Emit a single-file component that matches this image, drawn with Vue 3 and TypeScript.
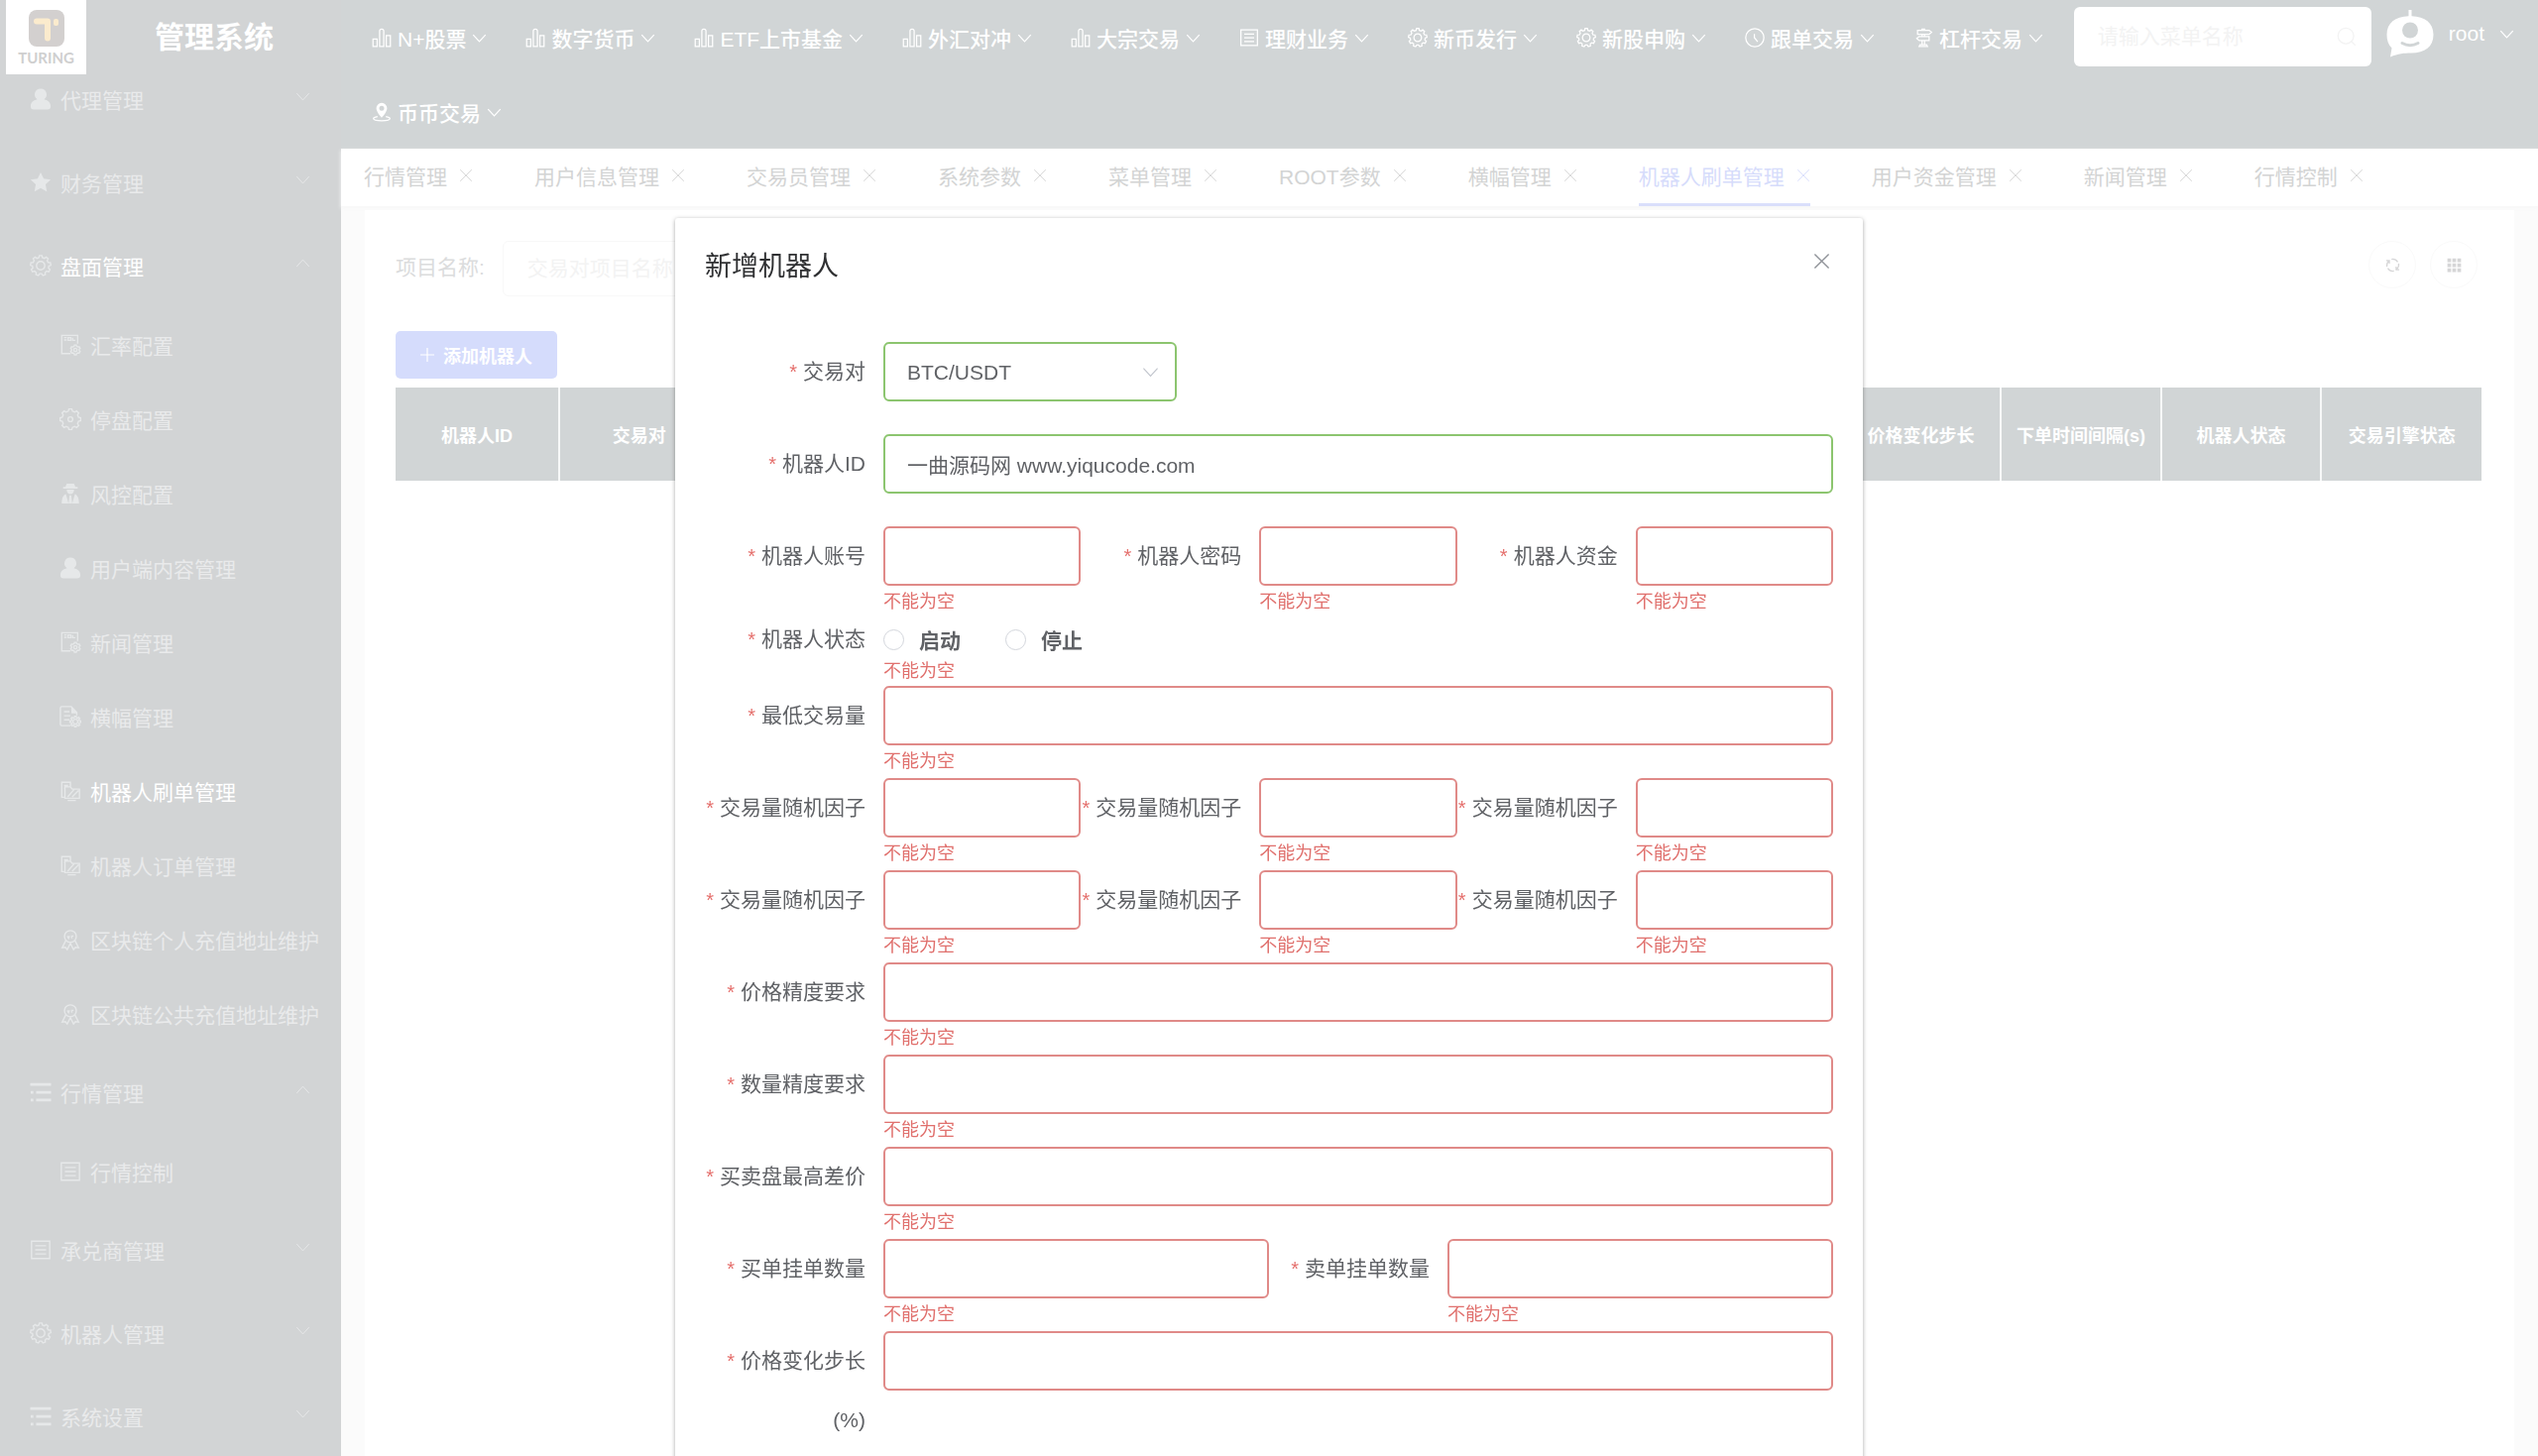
<script setup lang="ts">
import { h, ref } from 'vue'
import type { FunctionalComponent } from 'vue'

interface Shape {
  d: string
  fill?: boolean
}

interface MenuEntry {
  icon: string
  label: string
  open?: boolean
  lit?: boolean
  children?: MenuEntry[]
}

interface Field {
  id: string
  label: string
  secret?: boolean
}

function gear(cx: number, cy: number, teeth: number, outer: number, inner: number): string {
  const step = (Math.PI * 2) / teeth
  const at = (r: number, a: number) =>
    `${(cx + r * Math.sin(a)).toFixed(2)} ${(cy - r * Math.cos(a)).toFixed(2)}`
  let d = ''
  for (let i = 0; i < teeth; i++) {
    const a = i * step
    d += `${i ? 'L' : 'M'}${at(outer, a - step * 0.18)}L${at(outer, a + step * 0.18)}`
    d += `L${at(inner, a + step * 0.32)}L${at(inner, a + step * 0.68)}`
  }
  return d + 'Z'
}

function circle(cx: number, cy: number, r: number): string {
  return `M${cx - r} ${cy}a${r} ${r} 0 1 0 ${2 * r} 0a${r} ${r} 0 1 0 ${-2 * r} 0Z`
}

const shapes: Record<string, Shape[]> = {
  bars: [{ d: 'M1.500 13.500h5v9h-5zM9.500 4a2.500 2.500 0 0 1 5 0v18.500h-5zM17.500 9.500h5v13h-5z' }],
  list: [{ d: 'M2 2.500h20v19H2zM6 7.500h12M6 12h12M6 16.500h12' }],
  gear: [{ d: gear(12, 12, 9, 11.2, 9) }, { d: circle(12, 12, 4.6) }],
  cog: [{ d: gear(12, 12, 8, 11.4, 9.2) }, { d: circle(12, 12, 2.6) }],
  clock: [{ d: circle(12, 12, 11) }, { d: 'M11.500 7.500v4.500l4 5' }],
  sign: [
    { d: 'M10.500 3V1.500h3V3M5 3h14l3 2.500L19 8H5zM10.500 8v2.500M13.500 8v2.500M19 10.500H7L4 13l3 2.500h12zM10.500 15.500v5M13.500 15.500v5M7 22.500l1-2h8l1 2z' },
  ],
  pin: [
    { d: 'M12 1a6.500 6.500 0 0 0-6.500 6.500C5.500 12 12 19 12 19s6.500-7 6.500-11.500A6.500 6.500 0 0 0 12 1zm0 9.500a3 3 0 1 1 0-6 3 3 0 0 1 0 6z', fill: true },
    { d: 'M7 17.500c-3 .5-5 1.300-5 2.300 0 1.700 4.500 2.700 10 2.700s10-1 10-2.700c0-1-2-1.800-5-2.300' },
  ],
  user: [
    { d: 'M12 .5a6.500 6.500 0 0 1 3.800 11.800C20.500 13.200 23 16 23 20c0 2.500-1 3.500-3.500 3.500h-15C2 23.500 1 22.500 1 20c0-4 2.500-6.800 7.200-7.700A6.500 6.500 0 0 1 12 .5z', fill: true },
  ],
  star: [{ d: 'M12 1l3.400 7 7.600 1-5.600 5.300L18.800 22 12 18.300 5.200 22l1.400-7.700L1 9l7.600-1z', fill: true }],
  sheet: [
    { d: 'M12 21.500H2.500v-20H20v9M5 4h3M5 6.500h3M9.500 4h3v3h-3zM14.500 4v3h3' },
    { d: gear(17.5, 17.5, 6, 5.5, 4.3) },
    { d: circle(17.5, 17.5, 1.8) },
  ],
  agent: [
    { d: 'M6.500 4.500L8 1h8l1.500 3.500H20v2H4v-2zM8 7.500h8c0 3-1.500 5-4 5s-4-2-4-5zM7 12.500l3 10.500H2.500c0-5 1-9 4.500-10.500zM17 12.500L14 23h7.500c0-5-1-9-4.500-10.500zM11 14h2l1 9h-4z', fill: true },
  ],
  doc: [
    { d: 'M12 22H2.500a1.500 1.500 0 0 1-1.500-1.500v-18A1.500 1.500 0 0 1 2.500 1H13l6 6.500v3M5 6.500h6M5 11h7M5 15.500h6' },
    { d: 'M13 1l7 7.500h-7z', fill: true },
    { d: gear(17.5, 17.5, 8, 6, 4.5) },
    { d: circle(17.5, 17.5, 2.6) },
  ],
  boards: [
    { d: 'M6 19H2.500V2.500H12v5M5 6h4.500M5 9h1.500M6 7.500h6l2 2.500h8v10H6zM9 18.500l7-8M14 18.500l7-7M9 22.500h9' },
  ],
  medal: [
    { d: circle(12, 8.5, 6.5) },
    { d: 'M7 13l-4 8 3.500-.5L8.500 23l3.500-7 3.500 7 2-2.500 3.500.5-4-8M8.500 8l1.500 2.500L11 8M13.500 10.500V8h2' },
  ],
  menu: [{ d: 'M.5 2h23v3H.500zM7 10.500h16.500v3H7zM7 19h16.500v3H7zM1 10.500h3v3H1zM1 19h3v3H1z', fill: true }],
  down: [{ d: 'M2 6.500l10 11 10-11' }],
  up: [{ d: 'M2 17.500l10-11 10 11' }],
  cross: [{ d: 'M2 2l20 20M22 2L2 22' }],
  plus: [{ d: 'M12 0v24M0 12h24' }],
  search: [{ d: circle(11, 11, 9.5) }, { d: 'M18 18l4.500 4.500' }],
  refresh: [
    { d: 'M2.500 14.500a10 10 0 0 1 3-9M1.500 4.500h5v5M21.500 9.500a10 10 0 0 1-3 9M22.500 19.500h-5v-5M10 2.500a10 10 0 0 1 10 4.500M14 21.500A10 10 0 0 1 4 17' },
  ],
  grid: [
    { d: 'M1 1h6v6H1zM9 1h6v6H9zM17 1h6v6h-6zM1 9h6v6H1zM9 9h6v6H9zM17 9h6v6h-6zM1 17h6v6H1zM9 17h6v6H9zM17 17h6v6h-6z', fill: true },
  ],
}

const Icon: FunctionalComponent<{ name: string; weight?: number }> = (props) =>
  h(
    'svg',
    { viewBox: '0 0 24 24', 'aria-hidden': 'true' },
    shapes[props.name].map((s) =>
      h('path', {
        d: s.d,
        fill: s.fill ? 'currentColor' : 'none',
        stroke: s.fill ? 'none' : 'currentColor',
        'stroke-width': props.weight ?? 1.5,
      }),
    ),
  )
Icon.props = ['name', 'weight']

const topMenu: MenuEntry[] = [
  { icon: 'bars', label: 'N+股票' },
  { icon: 'bars', label: '数字货币' },
  { icon: 'bars', label: 'ETF上市基金' },
  { icon: 'bars', label: '外汇对冲' },
  { icon: 'bars', label: '大宗交易' },
  { icon: 'list', label: '理财业务' },
  { icon: 'gear', label: '新币发行' },
  { icon: 'gear', label: '新股申购' },
  { icon: 'clock', label: '跟单交易' },
  { icon: 'sign', label: '杠杆交易' },
  { icon: 'pin', label: '币币交易' },
]

const sideMenu: MenuEntry[] = [
  { icon: 'user', label: '代理管理' },
  { icon: 'star', label: '财务管理' },
  {
    icon: 'gear',
    label: '盘面管理',
    open: true,
    lit: true,
    children: [
      { icon: 'sheet', label: '汇率配置' },
      { icon: 'cog', label: '停盘配置' },
      { icon: 'agent', label: '风控配置' },
      { icon: 'user', label: '用户端内容管理' },
      { icon: 'sheet', label: '新闻管理' },
      { icon: 'doc', label: '横幅管理' },
      { icon: 'boards', label: '机器人刷单管理', lit: true },
      { icon: 'boards', label: '机器人订单管理' },
      { icon: 'medal', label: '区块链个人充值地址维护' },
      { icon: 'medal', label: '区块链公共充值地址维护' },
    ],
  },
  {
    icon: 'menu',
    label: '行情管理',
    open: true,
    children: [{ icon: 'list', label: '行情控制' }],
  },
  { icon: 'list', label: '承兑商管理' },
  { icon: 'gear', label: '机器人管理' },
  { icon: 'menu', label: '系统设置' },
]

const tabs = [
  '行情管理',
  '用户信息管理',
  '交易员管理',
  '系统参数',
  '菜单管理',
  'ROOT参数',
  '横幅管理',
  '机器人刷单管理',
  '用户资金管理',
  '新闻管理',
  '行情控制',
]
const activeTab = ref('机器人刷单管理')

const columns = ['机器人ID', '交易对', '', '', '', '', '', '', '', '价格变化步长', '下单时间间隔(s)', '机器人状态', '交易引擎状态']

const pair = ref('BTC/USDT')
const robotId = ref('一曲源码网 www.yiqucode.com')

const accountRow: Field[] = [
  { id: 'account', label: '机器人账号' },
  { id: 'password', label: '机器人密码', secret: true },
  { id: 'funds', label: '机器人资金' },
]

const detailRows: Field[][] = [
  [{ id: 'min-volume', label: '最低交易量' }],
  [
    { id: 'factor-1', label: '交易量随机因子' },
    { id: 'factor-2', label: '交易量随机因子' },
    { id: 'factor-3', label: '交易量随机因子' },
  ],
  [
    { id: 'factor-4', label: '交易量随机因子' },
    { id: 'factor-5', label: '交易量随机因子' },
    { id: 'factor-6', label: '交易量随机因子' },
  ],
  [{ id: 'price-precision', label: '价格精度要求' }],
  [{ id: 'amount-precision', label: '数量精度要求' }],
  [{ id: 'max-spread', label: '买卖盘最高差价' }],
  [
    { id: 'buy-orders', label: '买单挂单数量' },
    { id: 'sell-orders', label: '卖单挂单数量' },
  ],
]
</script>

<template>
  <div class="page">
    <aside class="side">
      <div class="brand">
        <div class="logo">
          <svg class="logo-mark" viewBox="0 0 36 37" aria-hidden="true">
            <rect width="36" height="37" rx="8" fill="#d3d0cf" />
            <path d="M8 11.500h11v17" fill="none" stroke="#fbebcd" stroke-width="6" stroke-linecap="round" stroke-linejoin="round" />
            <rect x="25" y="9" width="5" height="7" rx="2" fill="#fbebcd" />
          </svg>
          <span class="logo-name">TURING</span>
        </div>
        <h1 class="system">管理系统</h1>
      </div>
      <nav class="side-menu">
        <div v-for="group in sideMenu" :key="group.label">
          <button type="button" class="group" :class="{ lit: group.lit }">
            <Icon :name="group.icon" class="side-icon" />
            <span class="group-label">{{ group.label }}</span>
            <Icon :name="group.open ? 'up' : 'down'" class="chevron faint" />
          </button>
          <a
            v-for="item in group.children"
            :key="item.label"
            href="#"
            class="leaf"
            :class="{ lit: item.lit }"
          >
            <Icon :name="item.icon" class="side-icon" />
            <span>{{ item.label }}</span>
          </a>
        </div>
      </nav>
    </aside>

    <div class="main">
      <header class="top">
        <nav class="top-menu">
          <button v-for="item in topMenu" :key="item.label" type="button" class="top-item">
            <Icon :name="item.icon" class="top-icon" />
            <span>{{ item.label }}</span>
            <Icon name="down" class="chevron" :weight="2" />
          </button>
        </nav>
        <label class="search">
          <input type="text" placeholder="请输入菜单名称" aria-label="请输入菜单名称" />
          <Icon name="search" class="search-icon" />
        </label>
        <button type="button" class="account">
          <svg class="avatar" viewBox="0 0 48 48" aria-hidden="true">
            <path d="M22.500 0h3v6.200C39 6.500 47.500 13 47.500 25S39 43.500 25 43.500c-7 0-13 .5-21 4l1.500-9C2 35 .5 30.500.5 25 .5 13 9 6.500 22.500 6.200z" fill="#fff" />
            <ellipse cx="24" cy="20.500" rx="8" ry="8" fill="#d1d5d6" />
            <path d="M16 33.500q8 4.500 16 0" fill="none" stroke="#d1d5d6" stroke-width="3" stroke-linecap="round" />
          </svg>
          <span>root</span>
          <Icon name="down" class="chevron" :weight="2" />
        </button>
      </header>

      <div class="tabs" role="tablist">
        <button
          v-for="tab in tabs"
          :key="tab"
          type="button"
          role="tab"
          class="tab"
          :class="{ active: tab === activeTab }"
          :aria-selected="tab === activeTab"
          @click="activeTab = tab"
        >
          <span>{{ tab }}</span>
          <Icon name="cross" class="tab-close" />
        </button>
      </div>

      <main class="card">
        <div class="filters">
          <label for="project">项目名称:</label>
          <input id="project" class="project" type="text" placeholder="交易对项目名称" />
          <div class="tools">
            <button type="button" class="round" aria-label="refresh"><Icon name="refresh" class="tool-icon" :weight="2" /></button>
            <button type="button" class="round" aria-label="columns"><Icon name="grid" class="tool-icon" /></button>
          </div>
        </div>
        <button type="button" class="add">
          <Icon name="plus" class="add-icon" :weight="2" />
          <span>添加机器人</span>
        </button>
        <table class="robots">
          <thead>
            <tr>
              <th v-for="(name, i) in columns" :key="i" scope="col">{{ name }}</th>
            </tr>
          </thead>
        </table>
      </main>
    </div>

    <div class="overlay">
      <section class="dialog" role="dialog" aria-labelledby="dialog-title">
        <header class="dialog-head">
          <h2 id="dialog-title">新增机器人</h2>
          <button type="button" class="close" aria-label="close"><Icon name="cross" class="close-icon" :weight="2" /></button>
        </header>
        <form class="form" @submit.prevent>
          <div class="row">
            <div class="field">
              <label for="pair" class="label">交易对</label>
              <div class="control">
                <div class="pick">
                  <select id="pair" v-model="pair" class="box ok">
                    <option>BTC/USDT</option>
                  </select>
                  <Icon name="down" class="pick-icon" />
                </div>
                <p class="error"></p>
              </div>
            </div>
          </div>

          <div class="row">
            <div class="field">
              <label for="robot-id" class="label">机器人ID</label>
              <div class="control">
                <input id="robot-id" v-model="robotId" class="box ok" type="text" />
                <p class="error"></p>
              </div>
            </div>
          </div>

          <div class="row">
            <div v-for="f in accountRow" :key="f.id" class="field">
              <label :for="f.id" class="label">{{ f.label }}</label>
              <div class="control">
                <input :id="f.id" class="box bad" :type="f.secret ? 'password' : 'text'" />
                <p class="error">不能为空</p>
              </div>
            </div>
          </div>

          <div class="row">
            <div class="field short" role="radiogroup" aria-labelledby="state-label">
              <span id="state-label" class="label">机器人状态</span>
              <div class="control">
                <div class="radios">
                  <label class="radio"><input type="radio" name="state" value="on" />启动</label>
                  <label class="radio"><input type="radio" name="state" value="off" />停止</label>
                </div>
                <p class="error">不能为空</p>
              </div>
            </div>
          </div>

          <div v-for="(row, i) in detailRows" :key="i" class="row">
            <div v-for="f in row" :key="f.id" class="field">
              <label :for="f.id" class="label">{{ f.label }}</label>
              <div class="control">
                <input :id="f.id" class="box bad" type="text" />
                <p class="error">不能为空</p>
              </div>
            </div>
          </div>

          <div class="row">
            <div class="field">
              <label for="price-step" class="label">价格变化步长(%)</label>
              <div class="control">
                <input id="price-step" class="box bad" type="text" />
              </div>
            </div>
          </div>
        </form>
      </section>
    </div>
  </div>
</template>

<style>
html,
body {
  height: 100%;
  overflow: hidden;
}
</style>

<style scoped>
.page,
.page * {
  box-sizing: border-box;
}

.page {
  display: flex;
  height: 100vh;
  overflow: hidden;
  background: #fbfbfb;
  color: #606266;
  font-family: 'Liberation Sans', 'Noto Sans CJK SC', sans-serif;
  font-size: 21px;
}

button,
input,
select {
  margin: 0;
  padding: 0;
  border: 0;
  background: none;
  color: inherit;
  font: inherit;
  outline: 0;
}

svg {
  display: block;
  flex: none;
}

.chevron {
  width: 15px;
  height: 15px;
}

/* sidebar */
.side {
  flex: none;
  width: 344px;
  overflow: hidden;
  background: #d2d4d5;
}

.brand {
  display: flex;
  height: 75px;
  padding-left: 6px;
}

.logo {
  display: flex;
  flex-direction: column;
  align-items: center;
  width: 81px;
  height: 75px;
  padding-top: 10px;
  background: #fff;
}

.logo-mark {
  width: 36px;
  height: 37px;
}

.logo-name {
  margin-top: 3px;
  color: #cfcfcf;
  font: bold 15px/16px Lato, sans-serif;
}

.system {
  margin: 0 0 0 69px;
  color: #fff;
  font-size: 30px;
  font-weight: 700;
  line-height: 76px;
}

.side-menu {
  margin-top: -17px;
}

.group {
  display: flex;
  align-items: center;
  width: 100%;
  height: 84px;
  padding: 0 31px 0 30px;
  color: #e9eaeb;
  text-align: left;
}

.group-label {
  flex: 1;
}

.leaf {
  display: flex;
  align-items: center;
  height: 75px;
  padding-left: 60px;
  color: #e9eaeb;
  text-decoration: none;
  white-space: nowrap;
}

.lit {
  color: #fff;
}

.side-icon {
  width: 22px;
  height: 22px;
  margin-right: 9px;
  color: #e6e8e9;
}

.faint {
  margin-bottom: 6px;
  color: #e6e8e9;
}

/* header */
.main {
  display: flex;
  flex: 1;
  flex-direction: column;
  min-width: 0;
}

.top {
  display: flex;
  flex: none;
  align-items: flex-start;
  padding: 0 24px 0 31px;
  background: #d1d5d6;
  color: #fff;
}

.top-menu {
  display: flex;
  flex: 1;
  flex-wrap: wrap;
  column-gap: 39px;
  margin-right: 20px;
}

.top-item {
  display: flex;
  align-items: center;
  gap: 6px;
  height: 75px;
  padding-top: 1px;
  font-weight: 500;
}

.top-icon {
  width: 20px;
  height: 20px;
}

.search {
  display: flex;
  align-items: center;
  width: 300px;
  height: 60px;
  margin-top: 7px;
  padding: 0 15px 0 24px;
  border-radius: 6px;
  background: #fff;
}

.search input {
  flex: 1;
  min-width: 0;
}

.search input::placeholder,
.project::placeholder {
  color: #f3f3f3;
  opacity: 1;
}

.search-icon {
  width: 20px;
  height: 20px;
  color: #f3f3f3;
}

.account {
  display: flex;
  align-items: center;
  gap: 15px;
  height: 68px;
  margin-left: 15px;
}

.avatar {
  width: 48px;
  height: 48px;
}

/* tabs */
.tabs {
  display: flex;
  flex: none;
  gap: 62px;
  height: 58px;
  padding-left: 23px;
  background: #fff;
  box-shadow: 0 2px 4px #f7f7f7;
}

.tab {
  display: flex;
  align-items: center;
  gap: 12px;
  padding-bottom: 2px;
  border-bottom: 3px solid transparent;
  color: #d3d4d4;
  white-space: nowrap;
}

.tab-close {
  width: 14px;
  height: 14px;
}

.active {
  border-color: #dadffb;
  color: #d6dcfb;
}

/* content */
.card {
  flex: 1;
  margin: 4px 24px 0;
  padding: 31px 33px 0 31px;
  background: #fff;
}

.filters {
  display: flex;
  height: 56px;
  color: #dbdcdd;
  line-height: 54px;
}

.project {
  width: 330px;
  margin-left: 18px;
  padding-left: 24px;
  border: 1px solid #f8f8f8;
  border-radius: 6px;
}

.tools {
  display: flex;
  gap: 14px;
  margin-right: 4px;
  margin-left: auto;
}

.round {
  display: grid;
  place-items: center;
  width: 48px;
  height: 48px;
  border: 1px solid #fafafa;
  border-radius: 50%;
  color: #d6d6d7;
}

.tool-icon {
  width: 15px;
  height: 15px;
}

.add {
  display: flex;
  align-items: center;
  gap: 9px;
  height: 48px;
  margin-top: 35px;
  padding: 0 25px;
  border-radius: 5px;
  background: #d5dcfc;
  color: #fff;
  font-size: 18px;
  font-weight: 700;
}

.add-icon {
  width: 14px;
  height: 14px;
}

.robots {
  width: 100%;
  margin-top: 9px;
  border-collapse: collapse;
  table-layout: fixed;
}

.robots th {
  height: 94px;
  padding: 0;
  border-right: 2px solid #f7f8f8;
  background: #d1d5d6;
  color: #fff;
  font-size: 18px;
  font-weight: 700;
  white-space: nowrap;
}

.robots th:first-child {
  width: 165px;
}

.robots th:last-child {
  border-right: 0;
}

/* dialog */
.overlay {
  position: fixed;
  inset: 0;
  overflow: hidden;
}

.dialog {
  width: 1198px;
  margin: 220px auto 0;
  padding-bottom: 45px;
  border-radius: 3px;
  background: #fff;
  box-shadow: 0 1px 4px rgba(0, 0, 0, 0.35);
}

.dialog-head {
  display: flex;
  align-items: flex-start;
  justify-content: space-between;
  padding: 30px 33px 15px 30px;
}

.dialog-head h2 {
  margin: 0;
  color: #303133;
  font-size: 27px;
  font-weight: 400;
  line-height: 38px;
}

.close {
  height: 26px;
  color: #909399;
}

.close-icon {
  width: 17px;
  height: 17px;
}

.form {
  padding: 42px 30px 0;
}

.row {
  display: flex;
}

.field {
  display: flex;
  flex: 1;
  align-items: flex-start;
  min-width: 0;
}

.label {
  flex: none;
  width: 180px;
  padding-right: 18px;
  line-height: 60px;
  text-align: right;
}

.label::before {
  content: '*';
  margin-right: 6px;
  color: #e5706d;
  font-size: 20px;
}

.control {
  flex: 1;
  min-width: 0;
}

.box {
  display: block;
  width: 100%;
  height: 60px;
  padding: 0 22px;
  border: 2px solid;
  border-radius: 6px;
  background: #fff;
  appearance: none;
}

.ok {
  border-color: #8cc56f;
}

.bad {
  border-color: #e08a88;
}

.error {
  height: 33px;
  margin: 0;
  padding-top: 7px;
  color: #e0706d;
  font-size: 18px;
  line-height: 18px;
}

.pick {
  display: grid;
  align-items: center;
  width: 296px;
}

.pick > * {
  grid-area: 1 / 1;
}

.pick-icon {
  justify-self: end;
  width: 17px;
  height: 17px;
  margin-right: 18px;
  color: #c0c4cc;
  pointer-events: none;
}

.short .label {
  height: 35px;
  line-height: 42px;
}

.short .error {
  padding-top: 9px;
}

.radios {
  display: flex;
  gap: 45px;
  height: 35px;
}

.radio {
  display: flex;
  align-items: center;
  gap: 15px;
  height: 42px;
  font-weight: 700;
}

.radio input {
  width: 21px;
  height: 21px;
  border: 1px solid #d3d6dc;
  border-radius: 50%;
  background: #fff;
  appearance: none;
}
</style>
